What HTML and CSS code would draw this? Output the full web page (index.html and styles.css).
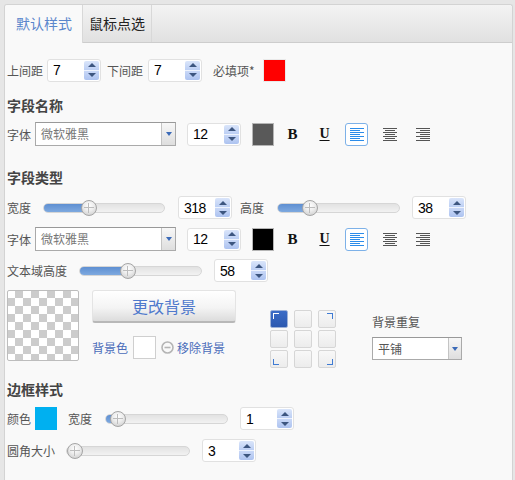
FILE: index.html
```html
<!DOCTYPE html>
<html lang="zh">
<head>
<meta charset="utf-8">
<link rel="stylesheet" href="styles.css">
</head>
<body>
<div class="panel">
  <div class="tabs">
    <div class="tab active">默认样式</div>
    <div class="tab">鼠标点选</div>
  </div>
  <div class="content">
    <div class="row r1">
      <span class="lbl">上间距</span>
      <div class="spin ml4"><span class="val">7</span><span class="sb"><i class="up"></i><i class="dn"></i></span></div>
      <span class="lbl ml6">下间距</span>
      <div class="spin ml5"><span class="val">7</span><span class="sb"><i class="up"></i><i class="dn"></i></span></div>
      <span class="lbl ml11">必填项*</span>
      <span class="swatch red ml8"></span>
    </div>

    <div class="heading h1">字段名称</div>
    <div class="row r2">
      <span class="lbl">字体</span>
      <div class="select ml4 wfont"><span class="sel-text">微软雅黑</span><span class="sel-btn"><i></i></span></div>
      <div class="spin ml11"><span class="val">12</span><span class="sb"><i class="up"></i><i class="dn"></i></span></div>
      <span class="swatch gray ml11"></span>
      <span class="ibtn bold ml7">B</span>
      <span class="ibtn under ml9">U</span>
      <span class="ibtn align selected ml9"><svg width="14" height="13" viewBox="0 0 14 13" shape-rendering="crispEdges"><g stroke="#2b8cea" stroke-width="1"><line x1="0" y1="0.5" x2="14" y2="0.5"/><line x1="0" y1="2.5" x2="10" y2="2.5"/><line x1="0" y1="4.5" x2="14" y2="4.5"/><line x1="0" y1="6.5" x2="10" y2="6.5"/><line x1="0" y1="8.5" x2="14" y2="8.5"/><line x1="0" y1="10.5" x2="10" y2="10.5"/><line x1="0" y1="12.5" x2="14" y2="12.5"/></g></svg></span>
      <span class="ibtn align ml10"><svg width="14" height="13" viewBox="0 0 14 13" shape-rendering="crispEdges"><g stroke="#555" stroke-width="1"><line x1="0" y1="0.5" x2="14" y2="0.5"/><line x1="2" y1="2.5" x2="12" y2="2.5"/><line x1="0" y1="4.5" x2="14" y2="4.5"/><line x1="2" y1="6.5" x2="12" y2="6.5"/><line x1="0" y1="8.5" x2="14" y2="8.5"/><line x1="2" y1="10.5" x2="12" y2="10.5"/><line x1="0" y1="12.5" x2="14" y2="12.5"/></g></svg></span>
      <span class="ibtn align ml10"><svg width="14" height="13" viewBox="0 0 14 13" shape-rendering="crispEdges"><g stroke="#555" stroke-width="1"><line x1="0" y1="0.5" x2="14" y2="0.5"/><line x1="4" y1="2.5" x2="14" y2="2.5"/><line x1="0" y1="4.5" x2="14" y2="4.5"/><line x1="4" y1="6.5" x2="14" y2="6.5"/><line x1="0" y1="8.5" x2="14" y2="8.5"/><line x1="4" y1="10.5" x2="14" y2="10.5"/><line x1="0" y1="12.5" x2="14" y2="12.5"/></g></svg></span>
    </div>

    <div class="heading h2">字段类型</div>
    <div class="row r3">
      <span class="lbl">宽度</span>
      <div class="slider ml12 w122"><div class="fill" style="width:45px"></div><div class="thumb" style="left:45px"></div></div>
      <div class="spin ml13"><span class="val">318</span><span class="sb"><i class="up"></i><i class="dn"></i></span></div>
      <span class="lbl ml8">高度</span>
      <div class="slider ml13 w123"><div class="fill" style="width:32px"></div><div class="thumb" style="left:32px"></div></div>
      <div class="spin ml12"><span class="val">38</span><span class="sb"><i class="up"></i><i class="dn"></i></span></div>
    </div>
    <div class="row r4">
      <span class="lbl">字体</span>
      <div class="select ml4 wfont"><span class="sel-text">微软雅黑</span><span class="sel-btn"><i></i></span></div>
      <div class="spin ml11"><span class="val">12</span><span class="sb"><i class="up"></i><i class="dn"></i></span></div>
      <span class="swatch black ml11"></span>
      <span class="ibtn bold ml7">B</span>
      <span class="ibtn under ml9">U</span>
      <span class="ibtn align selected ml9"><svg width="14" height="13" viewBox="0 0 14 13" shape-rendering="crispEdges"><g stroke="#2b8cea" stroke-width="1"><line x1="0" y1="0.5" x2="14" y2="0.5"/><line x1="0" y1="2.5" x2="10" y2="2.5"/><line x1="0" y1="4.5" x2="14" y2="4.5"/><line x1="0" y1="6.5" x2="10" y2="6.5"/><line x1="0" y1="8.5" x2="14" y2="8.5"/><line x1="0" y1="10.5" x2="10" y2="10.5"/><line x1="0" y1="12.5" x2="14" y2="12.5"/></g></svg></span>
      <span class="ibtn align ml10"><svg width="14" height="13" viewBox="0 0 14 13" shape-rendering="crispEdges"><g stroke="#555" stroke-width="1"><line x1="0" y1="0.5" x2="14" y2="0.5"/><line x1="2" y1="2.5" x2="12" y2="2.5"/><line x1="0" y1="4.5" x2="14" y2="4.5"/><line x1="2" y1="6.5" x2="12" y2="6.5"/><line x1="0" y1="8.5" x2="14" y2="8.5"/><line x1="2" y1="10.5" x2="12" y2="10.5"/><line x1="0" y1="12.5" x2="14" y2="12.5"/></g></svg></span>
      <span class="ibtn align ml10"><svg width="14" height="13" viewBox="0 0 14 13" shape-rendering="crispEdges"><g stroke="#555" stroke-width="1"><line x1="0" y1="0.5" x2="14" y2="0.5"/><line x1="4" y1="2.5" x2="14" y2="2.5"/><line x1="0" y1="4.5" x2="14" y2="4.5"/><line x1="4" y1="6.5" x2="14" y2="6.5"/><line x1="0" y1="8.5" x2="14" y2="8.5"/><line x1="4" y1="10.5" x2="14" y2="10.5"/><line x1="0" y1="12.5" x2="14" y2="12.5"/></g></svg></span>
    </div>
    <div class="row r5">
      <span class="lbl">文本域高度</span>
      <div class="slider ml12 w123"><div class="fill" style="width:48px"></div><div class="thumb" style="left:48px"></div></div>
      <div class="spin ml12"><span class="val">58</span><span class="sb"><i class="up"></i><i class="dn"></i></span></div>
    </div>

    <div class="bgsec">
      <div class="checker"></div>
      <div class="bgmid">
        <div class="bigbtn">更改背景</div>
        <div class="bgrow">
          <span class="blue-lbl">背景色</span>
          <span class="swatch white ml5"></span>
          <svg class="minus" width="13" height="13" viewBox="0 0 13 13"><circle cx="6.5" cy="6.5" r="5.5" fill="none" stroke="#b5b5b5" stroke-width="1.6"/><line x1="3.5" y1="6.5" x2="9.5" y2="6.5" stroke="#b5b5b5" stroke-width="1.6"/></svg>
          <span class="blue-lbl ml3">移除背景</span>
        </div>
      </div>
      <div class="posgrid">
        <span class="cell on"><i class="c tl"></i></span>
        <span class="cell"></span>
        <span class="cell"><i class="c tr"></i></span>
        <span class="cell"></span>
        <span class="cell"></span>
        <span class="cell"></span>
        <span class="cell"><i class="c bl"></i></span>
        <span class="cell"></span>
        <span class="cell"><i class="c br"></i></span>
      </div>
      <div class="repeat">
        <div class="lbl rlbl">背景重复</div>
        <div class="select wrep"><span class="sel-text dark">平铺</span><span class="sel-btn"><i></i></span></div>
      </div>
    </div>

    <div class="heading h3">边框样式</div>
    <div class="row r6">
      <span class="lbl">颜色</span>
      <span class="swatch cyan ml4"></span>
      <span class="lbl ml11">宽度</span>
      <div class="slider ml13 w123"><div class="fill" style="width:12px"></div><div class="thumb" style="left:12px"></div></div>
      <div class="spin ml12"><span class="val">1</span><span class="sb"><i class="up"></i><i class="dn"></i></span></div>
    </div>
    <div class="row r7">
      <span class="lbl">圆角大小</span>
      <div class="slider ml11 w124"><div class="thumb" style="left:8px"></div></div>
      <div class="spin ml12"><span class="val">3</span><span class="sb"><i class="up"></i><i class="dn"></i></span></div>
    </div>
  </div>
</div>
</body>
</html>
```

FILE: styles.css
```css
* { box-sizing: border-box; }
html, body { margin: 0; padding: 0; }
body {
  background: #e6e6e6;
  font-family: "Noto Sans CJK SC", "Noto Sans", sans-serif;
  font-size: 12px;
  color: #555;
  overflow: hidden;
}
.panel {
  margin: 4px 2px 0 4px;
  height: 476px;
  border: 1px solid #d3d3d3;
  border-bottom: none;
  border-radius: 3px 3px 0 0;
  background: #f9f9f9;
}
.tabs {
  display: flex;
  height: 38px;
  background: linear-gradient(#f3f3f3, #e1e1e1);
  border-bottom: 1px solid #cdcdcd;
  border-radius: 3px 3px 0 0;
}
.tab {
  height: 37px;
  line-height: 37px;
  font-size: 14px;
  color: #222;
  padding: 0 6px;
  border-right: 1px solid #d8d8d8;
}
.tab.active {
  background: #f9f9f9;
  color: #5a86cc;
  height: 38px;
  padding: 0 10px 0 11px;
  border-radius: 3px 0 0 0;
}
.content { padding-left: 2px; }

.row { display: flex; align-items: center; height: 23px; }
.r1 { margin-top: 15px; height: 24px; }
.r2 { margin-top: 7px; height: 24px; }
.r3 { margin-top: 9px; }
.r4 { margin-top: 8px; height: 24px; }
.r5 { margin-top: 8px; }
.r6 { margin-top: 8px; }
.r7 { margin-top: 9px; }

.heading {
  height: 20px;
  line-height: 20px;
  font-size: 14px;
  font-weight: bold;
  color: #444;
}
.h1 { margin-top: 13px; }
.h2 { margin-top: 21px; }
.h3 { margin-top: 10px; }

.lbl { white-space: nowrap; line-height: 17px; }

.ml3 { margin-left: 3px; }
.ml4 { margin-left: 4px; }
.ml5 { margin-left: 5px; }
.ml6 { margin-left: 6px; }
.ml7 { margin-left: 7px; }
.ml8 { margin-left: 8px; }
.ml9 { margin-left: 9px; }
.ml10 { margin-left: 10px; }
.ml11 { margin-left: 11px; }
.ml12 { margin-left: 12px; }
.ml13 { margin-left: 13px; }

/* number spinner */
.spin {
  width: 54px;
  height: 23px;
  display: flex;
  align-items: center;
  justify-content: space-between;
  padding: 0 1px 0 5px;
  background: #fff;
  border: 1px solid #e1e1e1;
  border-radius: 3px;
}
.val {
  font-family: "Liberation Sans", Arial, sans-serif;
  font-size: 14px;
  letter-spacing: -0.6px;
  color: #000;
}
.sb {
  width: 15px;
  height: 19px;
  display: flex;
  flex-direction: column;
  border-radius: 2px;
  overflow: hidden;
}
.sb i {
  flex: 1;
  display: flex;
  align-items: center;
  justify-content: center;
  background: linear-gradient(#dae5fa, #bccff4);
}
.sb i.dn { border-top: 1px solid #eef3fd; background: linear-gradient(#c9d8f7, #adc3f0); }
.sb i::after {
  content: "";
  width: 0; height: 0;
  border-left: 4px solid transparent;
  border-right: 4px solid transparent;
}
.sb i.up::after { border-bottom: 4px solid #3d5680; }
.sb i.dn::after { border-top: 4px solid #3d5680; }

/* select */
.select {
  height: 24px;
  display: flex;
  background: #fff;
  border: 1px solid #aaa;
  border-top-color: #999;
}
.wfont { width: 141px; }
.wrep { width: 90px; height: 23px; }
.sel-text {
  flex: 1;
  padding-left: 5px;
  line-height: 21px;
  color: #777;
}
.sel-text.dark { color: #555; }
.sel-btn {
  width: 13px;
  border-left: 1px solid #c4c4c4;
  background: linear-gradient(#f7f7f7, #dedede);
  display: flex;
  align-items: center;
  justify-content: center;
}
.sel-btn i {
  width: 0; height: 0;
  border-left: 3.5px solid transparent;
  border-right: 3.5px solid transparent;
  border-top: 4px solid #3b6ab8;
}
.wfont .sel-btn { width: 14px; }

/* swatches */
.swatch {
  width: 22px;
  height: 23px;
  border: 1px solid #b5b5b5;
  display: inline-block;
}
.red { background: #ff0000; border-color: #e9e9e9; width: 23px; height: 23px; }
.gray { background: #595959; }
.black { background: #000; }
.white { background: #fff; border-color: #cfcfcf; width: 23px; }
.cyan { background: #00b0f0; border-color: #00b0f0; }

/* icon buttons */
.ibtn {
  width: 23px;
  height: 23px;
  display: flex;
  align-items: center;
  justify-content: center;
  border: 1px solid transparent;
  border-radius: 3px;
}
.bold {
  font-family: "Liberation Serif", serif;
  font-weight: bold;
  font-size: 15px;
  color: #111;
}
.under {
  font-family: "Liberation Serif", serif;
  font-weight: bold;
  font-size: 14px;
  color: #111;
  text-decoration: underline;
  text-underline-offset: 2px;
}
.align svg { display: block; }
.selected { border-color: #7db1e8; background: #fff; }

/* slider */
.slider {
  position: relative;
  height: 10px;
  border-radius: 5px;
  background: linear-gradient(#e2e2e2, #f2f2f2);
  border: 1px solid #d6d6d6;
}
.w122 { width: 122px; }
.w123 { width: 123px; }
.w124 { width: 124px; }
.fill {
  height: 100%;
  border-radius: 5px 0 0 5px;
  background: linear-gradient(#5e8fd2, #7ea9df);
}
.thumb {
  position: absolute;
  top: 50%;
  width: 16px;
  height: 16px;
  margin: -8px 0 0 -8px;
  border-radius: 50%;
  border: 1px solid #a5a5a5;
  background: radial-gradient(circle at 50% 35%, #ffffff 0%, #ececec 45%, #c6c6c6 100%);
}
.thumb::before, .thumb::after {
  content: "";
  position: absolute;
  background: #bdbdbd;
}
.thumb::before { left: 6px; top: 2px; width: 1px; height: 10px; }
.thumb::after { left: 2px; top: 6px; width: 10px; height: 1px; }

/* background section */
.bgsec { display: flex; margin-top: 8px; height: 79px; }
.checker {
  width: 72px;
  height: 71px;
  border: 1px solid #bdbdbd;
  border-radius: 2px;
  background-color: #fff;
  background-image: conic-gradient(#cccccc 0 25%, #ffffff 0 50%, #cccccc 0 75%, #ffffff 0);
  background-size: 16px 16px;
  background-position: -1px -1px;
}
.bgmid { margin-left: 13px; width: 144px; }
.bigbtn {
  height: 33px;
  line-height: 31px;
  text-align: center;
  font-size: 16px;
  color: #4f79cc;
  border-radius: 3px;
  background: linear-gradient(#ffffff 0%, #f4f4f4 55%, #dcdcdc 100%);
  border: 1px solid #e4e4e4;
  border-bottom: 2px solid #b8b8b8;
}
.bgrow { display: flex; align-items: center; margin-top: 13px; }
.blue-lbl { color: #4a6cb9; line-height: 17px; white-space: nowrap; }
.minus { margin-left: 5px; display: block; }

.posgrid {
  margin-left: 34px;
  margin-top: 20px;
  display: grid;
  grid-template-columns: repeat(3, 18px);
  grid-auto-rows: 18px;
  column-gap: 6px;
  row-gap: 2px;
  align-self: flex-start;
}
.cell {
  position: relative;
  border: 1px solid #d6d6d6;
  border-radius: 2px;
  background: linear-gradient(#f8f8f8, #ececec);
}
.cell.on {
  background: linear-gradient(#3b6cc6, #2c59b0);
  border-color: #9fb3d8;
}
.c { position: absolute; width: 6px; height: 6px; }
.c.tl { left: 2px; top: 2px; border-left: 1px solid #fff; border-top: 1px solid #fff; }
.c.tr { right: 2px; top: 2px; border-right: 1px solid #3f7bd3; border-top: 1px solid #3f7bd3; }
.c.bl { left: 2px; bottom: 2px; border-left: 1px solid #3f7bd3; border-bottom: 1px solid #3f7bd3; }
.c.br { right: 2px; bottom: 2px; border-right: 1px solid #3f7bd3; border-bottom: 1px solid #3f7bd3; }

.repeat { margin-left: 36px; margin-top: 23px; }
.rlbl { height: 17px; }
.repeat .select { margin-top: 7px; }
```
